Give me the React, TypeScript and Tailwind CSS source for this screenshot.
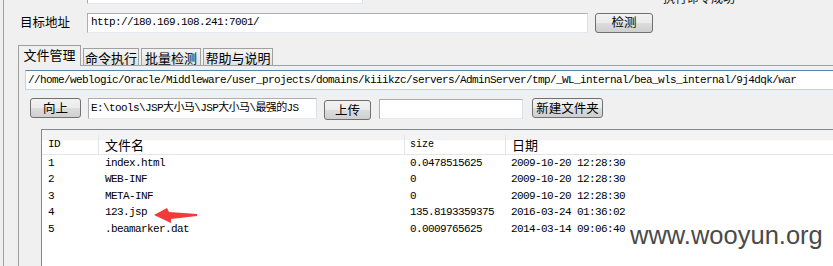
const mono = "font-['Liberation_Mono','Noto_Sans_CJK_SC',monospace] text-[11px] tracking-[-0.6px]"

const btn =
  'flex shrink-0 items-center justify-center rounded-[3px] border border-[#707070] bg-[linear-gradient(#f2f2f2_0%,#ebebeb_50%,#dddddd_51%,#cfcfcf_100%)] text-[12.5px] leading-none text-black'

const input = 'shrink-0 border border-[#abadb3] border-r-[#dbdfe6] border-b-[#e3e9ef] bg-white'

const rows = [
  { id: '1', name: 'index.html', size: '0.0478515625', date: '2009-10-20 12:28:30' },
  { id: '2', name: 'WEB-INF', size: '0', date: '2009-10-20 12:28:30' },
  { id: '3', name: 'META-INF', size: '0', date: '2009-10-20 12:28:30' },
  { id: '4', name: '123.jsp', size: '135.8193359375', date: '2016-03-24 01:36:02' },
  { id: '5', name: '.beamarker.dat', size: '0.0009765625', date: '2014-03-14 09:06:40' },
]

// other tabs, with their widths in the strip
const tabs = [
  { label: '命令执行', w: 'w-[56px]' },
  { label: '批量检测', w: 'w-[60px]' },
  { label: '帮助与说明', w: 'w-[70px]' },
]

export default function App() {
  return (
    <div className="relative h-[266px] w-[833px] overflow-hidden bg-[#f0f0f0] font-['Noto_Sans_CJK_SC',sans-serif] text-[12px] text-black">
      <div className="ml-[3px] flex h-full flex-col border-l border-[#a0a0a0]">
        {/* clipped top row */}
        <div className="flex h-[5px] items-start">
          <div className={`${input} ml-[83px] mt-[-16px] h-[20px] w-[276px]`} />
          <span className="ml-[300px] mt-[-8px] leading-[12px] text-[#111]">执行命令成功</span>
        </div>

        {/* target address */}
        <div className="mt-[7px] flex h-[21px] items-center">
          <span className="ml-[16px] w-[67px] text-[12.5px] leading-none">目标地址</span>
          <div className={`${input} flex h-[20px] w-[501px] items-center pl-[3px]`}>
            <span className={`${mono} leading-none`}>http://180.169.108.241:7001/</span>
          </div>
          <button className={`${btn} ml-[7px] h-[20px] w-[58px]`}>检测</button>
        </div>

        {/* tabs */}
        <div className="mt-[12px] ml-[14px] flex h-[20px] items-end">
          <div className="relative z-10 mb-[-1px] flex h-[21px] w-[63px] items-start justify-center border border-b-0 border-[#a0a0a0] bg-[#f0f0f0] pt-[2px] text-[13px] leading-[14px]">
            文件管理
          </div>
          {tabs.map((t) => (
            <div
              key={t.label}
              className={`${t.w} ml-[2px] flex h-[17px] items-center justify-center border border-b-0 border-[#a0a0a0] bg-[linear-gradient(#f4f4f4,#e2e2e2)] text-[13px] leading-none first:ml-0`}
            >
              {t.label}
            </div>
          ))}
        </div>

        {/* panel */}
        <div className="ml-[14px] flex flex-1 flex-col border-l border-t border-[#a0a0a0]">
          <div className="ml-[6px] mt-[4px] flex h-[20px] w-[815px] shrink-0 items-center border border-[#b7d9ed] border-t-[#5586a3] bg-white pl-[2px]">
            <span className={`${mono} whitespace-nowrap leading-none`}>
              //home/weblogic/Oracle/Middleware/user_projects/domains/kiiikzc/servers/AdminServer/tmp/_WL_internal/bea_wls_internal/9j4dqk/war
            </span>
          </div>

          <div className="mt-[8px] flex h-[22px] items-start">
            <button className={`${btn} ml-[11px] h-[20px] w-[51px]`}>向上</button>
            <div className={`${input} ml-[7px] flex h-[21px] w-[229px] items-center overflow-hidden pl-[2px]`}>
              <span className={`${mono} whitespace-nowrap leading-none`}>E:\tools\JSP大小马\JSP大小马\最强的JS</span>
            </div>
            <button className={`${btn} ml-[7px] mt-[2px] h-[20px] w-[47px]`}>上传</button>
            <div className={`${input} ml-[8px] mt-[1px] h-[20px] w-[144px]`} />
            <button className={`${btn} ml-[9px] h-[20px] w-[71px]`}>新建文件夹</button>
          </div>

          {/* file table */}
          <div className="relative ml-[22px] mt-[9px] flex-1 border-l border-t border-[#828790] bg-white">
            <div className="flex h-[25px] items-center border-b border-[#e5e5e5] bg-[linear-gradient(#f3f3f3_0%,#f3f3f3_40%,#ffffff_45%,#ffffff_100%)] pt-[5px]">
              <div className={`${mono} flex h-full w-[56px] items-center pl-[6px]`}>ID</div>
              <div className="flex h-full w-[306px] items-center border-l border-[#e5e5e5] pl-[6px] text-[13px]">文件名</div>
              <div className="flex h-full w-[101px] items-center border-l border-[#e5e5e5] pl-[5px] font-['Liberation_Mono',monospace] text-[10px]">size</div>
              <div className="flex h-full flex-1 items-center border-l border-[#e5e5e5] pl-[6px] text-[13px]">日期</div>
            </div>
            {rows.map((r) => (
              <div key={r.id} className={`${mono} flex h-[16.5px] items-center leading-none`}>
                <div className="w-[56px] pl-[6px]">{r.id}</div>
                <div className="w-[306px] pl-[7px]">{r.name}</div>
                <div className="w-[101px] pl-[6px]">{r.size}</div>
                <div className="flex-1 pl-[6px]">{r.date}</div>
              </div>
            ))}

            {/* red annotation arrow */}
            <svg className="absolute left-[109px] top-[75px]" width="48" height="20" viewBox="0 0 48 20">
              <path d="M3 10 L16 3 L18 7 L46 9 L46 11 L20 14 L20 18 Z" fill="#f23a3a" />
            </svg>
          </div>
        </div>
      </div>

      {/* watermark */}
      <div className="absolute left-[630px] top-[223px] font-['Liberation_Sans',sans-serif] text-[25.5px] leading-none text-[#4a4a4a]">
        www.wooyun.org
      </div>
    </div>
  )
}
